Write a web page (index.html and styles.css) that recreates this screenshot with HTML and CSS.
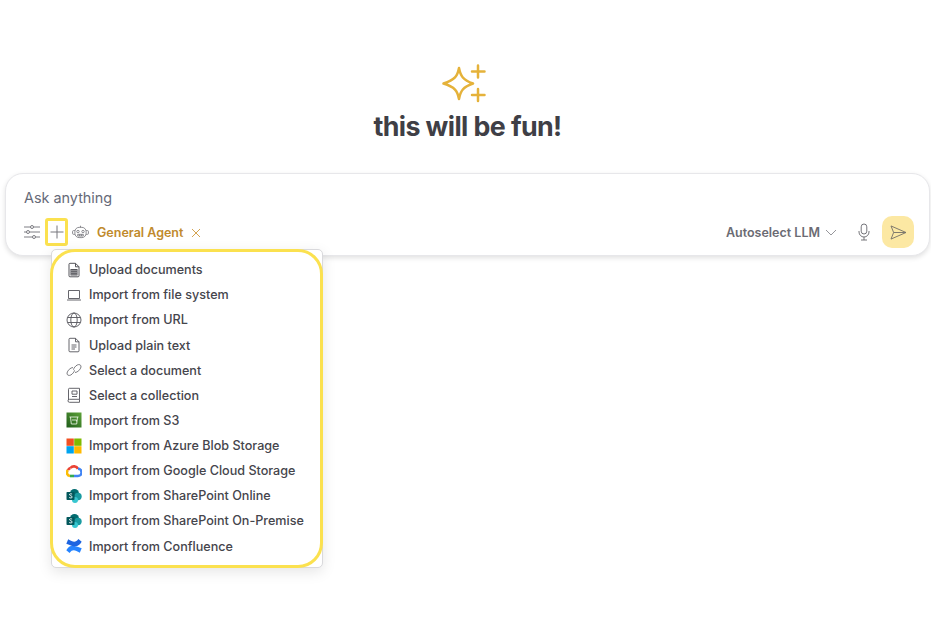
FILE: index.html
```html
<!DOCTYPE html>
<html lang="en">
<head>
<meta charset="utf-8">
<title>Chat</title>
<link rel="stylesheet" href="styles.css">
</head>
<body>
<main class="page">
  <section class="hero">
    <svg class="sparkle" viewBox="0 0 46 44" width="46" height="44" fill="none" stroke="#e5b23a" stroke-width="2.500" stroke-linecap="round" stroke-linejoin="round">
      <path d="M17 6 C18.500 14 21 18 31 21.500 C21 25 18.500 29 17 37 C15.500 29 13 25 1.500 21.500 C13 18 15.500 14 17 6 Z"/>
      <path d="M36 3.500V15.500M30 9.500H42.500"/>
      <path d="M36 27V39M30 33H42.500"/>
    </svg>
    <h1 class="title">this will be fun!</h1>
  </section>

  <section class="composer">
    <div class="prompt">Ask anything</div>
    <div class="toolbar">
      <div class="tools-left">
        <svg class="icon-tune" viewBox="0 0 16 16" width="16" height="16" fill="none" stroke="#6f6f76" stroke-width=".9">
          <path d="M0 3h6.500M9.500 3H16M0 8h2.500M5.500 8H16M0 13h8.500M11.500 13H16"/>
          <circle cx="8" cy="3" r="1.500"/><circle cx="4" cy="8" r="1.500"/><circle cx="10" cy="13" r="1.500"/>
        </svg>
        <button class="plus" type="button" aria-label="Add">
          <svg viewBox="0 0 14 14" width="14" height="14" fill="none" stroke="#77777d" stroke-width="1"><path d="M7 .500v13M.500 7h13"/></svg>
        </button>
        <svg class="icon-robot" viewBox="0 0 18 15" width="17" height="14" fill="none" stroke="#77777d" stroke-width=".9">
          <path d="M9 .800V2.500"/>
          <rect x="3" y="2.500" width="12" height="11" rx="4.500"/>
          <path d="M3 6H1.500a1 1 0 0 0-1 1v2a1 1 0 0 0 1 1H3M15 6h1.500a1 1 0 0 1 1 1v2a1 1 0 0 1-1 1H15"/>
          <circle cx="6.300" cy="7" r="1.300"/><circle cx="11.700" cy="7" r="1.300"/>
          <path d="M6 10h6v1.800H6zM8 10v1.800M10 10v1.800"/>
        </svg>
        <span class="agent">General Agent</span>
        <svg class="icon-x" viewBox="0 0 10 10" width="10" height="10" fill="none" stroke="#cf9a3d" stroke-width=".9"><path d="M1 1l8 8M9 1l-8 8"/></svg>
      </div>
      <div class="tools-right">
        <span class="llm">Autoselect LLM</span>
        <svg class="icon-chevron" viewBox="0 0 12 7" width="12" height="7" fill="none" stroke="#8a8a90" stroke-width=".9"><path d="M1 1l5 5 5-5"/></svg>
        <svg class="icon-mic" viewBox="0 0 12 18" width="12" height="18" fill="none" stroke="#66666c" stroke-width=".9">
          <rect x="3.200" y="1" width="5.600" height="10" rx="2.800"/>
          <path d="M1 8v1a5 5 0 0 0 10 0V8M6 14v3M3 17h6"/>
        </svg>
        <button class="send" type="button" aria-label="Send">
          <svg viewBox="0 0 18 16" width="17" height="15" fill="none" stroke="#77736a" stroke-width="1" stroke-linejoin="round"><path d="M1 1l16 7-16 7 2.800-7zM3.800 8H17"/></svg>
        </button>
      </div>
    </div>
  </section>

  <ul class="menu">
    <li class="item">
      <svg class="ico" viewBox="0 0 16 16" fill="none" stroke="#55555b" stroke-width="1"><path d="M3 2.300a1 1 0 0 1 1-1h5.500L13 4.800v9a1 1 0 0 1-1 1H4a1 1 0 0 1-1-1z"/><path d="M9.500 1.300v3.500H13"/><path d="M5 7.500h6v5.500H5zM5 9.300h6M5 11.200h6M7 7.500v5.500M9 7.500v5.500" stroke-width="1.100"/></svg>
      Upload documents
    </li>
    <li class="item">
      <svg class="ico" viewBox="0 0 16 16" fill="none" stroke="#55555b" stroke-width=".9"><path d="M2.500 3.500h11v8h-11zM1 13h14"/></svg>
      Import from file system
    </li>
    <li class="item">
      <svg class="ico" viewBox="0 0 16 16" fill="none" stroke="#55555b" stroke-width=".9"><circle cx="8" cy="8" r="7"/><ellipse cx="8" cy="8" rx="3.200" ry="7"/><path d="M1.500 5.500h13M1.500 10.500h13"/></svg>
      Import from URL
    </li>
    <li class="item">
      <svg class="ico" viewBox="0 0 16 16" fill="none" stroke="#55555b" stroke-width=".9"><path d="M3 2.300a1 1 0 0 1 1-1h5.500L13 4.800v9a1 1 0 0 1-1 1H4a1 1 0 0 1-1-1z"/><path d="M9.500 1.300v3.500H13M5.500 8h5M5.500 10h5M5.500 12h3.500"/></svg>
      Upload plain text
    </li>
    <li class="item">
      <svg class="ico" viewBox="0 0 16 16" fill="none" stroke="#66666c" stroke-width=".85"><path d="M7 5.500C4.500 5.500 1.500 8.500 1 11c-.4 2.200 2 3 3.800 2C6.500 12 8.300 10 8.500 8.300M9 10.500c2.500 0 5.500-3 6-5.500.4-2.200-2-3-3.800-2C9.500 4 7.700 6 7.500 7.700"/></svg>
      Select a document
    </li>
    <li class="item">
      <svg class="ico" viewBox="0 0 16 16" fill="none" stroke="#55555b" stroke-width=".9"><path d="M2.500 13V2.300a1 1 0 0 1 1-1h10v11h-10a1.500 1.500 0 0 0 0 3h10v-3"/><path d="M6 4h5v3.200H6zM6 9.500h5"/></svg>
      Select a collection
    </li>
    <li class="item">
      <svg class="ico" viewBox="0 0 16 16"><defs><linearGradient id="s3g" x1="0" y1="1" x2="1" y2="0"><stop offset="0" stop-color="#1f5c1a"/><stop offset="1" stop-color="#5ea33a"/></linearGradient></defs><rect x=".5" y=".5" width="15" height="15" fill="url(#s3g)"/><path d="M3.500 5h9M4.500 5l.8 7h5.400l.8-7M6 8h4.500v1.500" fill="none" stroke="#e3efdc" stroke-width=".9"/></svg>
      Import from S3
    </li>
    <li class="item">
      <svg class="ico" viewBox="0 0 16 16"><rect x=".5" y=".5" width="7.300" height="7.300" fill="#f25022"/><rect x="8.200" y=".5" width="7.300" height="7.300" fill="#7fba00"/><rect x=".5" y="8.200" width="7.300" height="7.300" fill="#00a4ef"/><rect x="8.200" y="8.200" width="7.300" height="7.300" fill="#ffb900"/></svg>
      Import from Azure Blob Storage
    </li>
    <li class="item">
      <svg class="ico" viewBox="0 0 16 16" fill="none" stroke-width="2.600">
        <path d="M4.500 5A4.500 4.500 0 0 1 12 5.800" stroke="#ea4335"/>
        <path d="M12 5.800A3.500 3.500 0 0 1 12 13H8" stroke="#4285f4"/>
        <path d="M8 13H4" stroke="#34a853"/>
        <path d="M4 13A3.500 3.500 0 0 1 2 7" stroke="#fbbc05"/>
        <path d="M2 7A4 4 0 0 1 4.500 5" stroke="#ea4335"/>
      </svg>
      Import from Google Cloud Storage
    </li>
    <li class="item">
      <svg class="ico" viewBox="0 0 16 16">
        <circle cx="8.500" cy="5.500" r="4.500" fill="#036c70"/><circle cx="12" cy="8.500" r="3.700" fill="#1a9ba1"/><circle cx="9" cy="12" r="3" fill="#37c6d0"/>
        <rect x=".5" y="4" width="8" height="8" rx=".8" fill="#03585c"/>
        <path d="M6.100 6.100c-1.500-.7-3-.2-2.500.9.400.8 2.700.8 2.600 2.100-.1 1-1.800 1.100-3 .4" fill="none" stroke="#fff" stroke-width=".9"/>
      </svg>
      Import from SharePoint Online
    </li>
    <li class="item">
      <svg class="ico" viewBox="0 0 16 16">
        <circle cx="8.500" cy="5.500" r="4.500" fill="#036c70"/><circle cx="12" cy="8.500" r="3.700" fill="#1a9ba1"/><circle cx="9" cy="12" r="3" fill="#37c6d0"/>
        <rect x=".5" y="4" width="8" height="8" rx=".8" fill="#03585c"/>
        <path d="M6.100 6.100c-1.500-.7-3-.2-2.500.9.400.8 2.700.8 2.600 2.100-.1 1-1.800 1.100-3 .4" fill="none" stroke="#fff" stroke-width=".9"/>
      </svg>
      Import from SharePoint On-Premise
    </li>
    <li class="item">
      <svg class="ico" viewBox="0 0 16 16">
        <path d="M.3 12.200C3.500 7 6.500 6.300 15.700 10.300L13.800 14.700C9 12 6.500 11 3.600 15z" fill="#2684ff"/>
        <path d="M15.700 3.800C12.500 9 9.500 9.700.3 5.700L2.200 1.300C7 4 9.500 5 12.400 1z" fill="#1d64e0"/>
      </svg>
      Import from Confluence
    </li>
  </ul>
</main>
</body>
</html>
```

FILE: styles.css
```css
* { box-sizing: border-box; }
html, body { margin: 0; padding: 0; background: #fff; }
body { font-family: Inter, "Liberation Sans", sans-serif; color: #3f3f46; }
.page { position: relative; width: 931px; height: 635px; padding: 62px 1px 0 5px; overflow: hidden; }
.hero { display: flex; flex-direction: column; align-items: center; }
.sparkle { display: block; margin-right: 6px; }
.title { margin: 0; font-size: 26.800px; line-height: 40px; font-weight: 700; letter-spacing: -.6px; color: #3f3f46; }
.composer { margin-top: 27px; height: 83px; width: 925px; border: 1px solid #e7e7ea; border-radius: 18px; background: #fff; box-shadow: 0 2px 5px rgba(0,0,0,.12); padding: 15px 15px 0 18px; }
.prompt { font-size: 14.400px; line-height: 18px; color: #666a78; }
.toolbar { display: flex; justify-content: space-between; align-items: center; margin-top: 9px; height: 32px; }
.tools-left, .tools-right { display: flex; align-items: center; }
.plus { width: 23px; height: 28px; margin-left: 5px; padding: 0; border: 3px solid #fbe14f; border-radius: 3px; background: #fff; display: flex; align-items: center; justify-content: center; }
.icon-robot { margin-left: 4px; }
.agent { margin-left: 8px; font-size: 12.500px; font-weight: 600; color: #c08a2c; }
.icon-x { margin-left: 8px; margin-top: 2px; }
.llm { font-size: 12.500px; font-weight: 600; color: #6b6b73; }
.icon-chevron { margin-left: 5px; margin-top: 1px; }
.icon-mic { margin-left: 21px; }
.send { width: 32px; height: 32px; margin-left: 12px; border: 0; padding: 0; border-radius: 10px; background: #fce8a3; display: flex; align-items: center; justify-content: center; }
.menu { position: absolute; left: 51px; top: 249px; width: 272px; height: 319px; margin: 0; padding: 7.030px 0 0; list-style: none; background: #fff; border: 1px solid #d9d9dc; border-radius: 5px; box-shadow: 0 4px 14px rgba(0,0,0,.1); display: flex; flex-direction: column; }
.menu::after { content: ""; position: absolute; inset: -1px -1px -1px -2px; border: 3px solid #fbe14f; border-radius: 25px; pointer-events: none; }
.item { height: 25.150px; flex: none; display: flex; align-items: center; gap: 7px; padding-left: 14px; font-size: 12.600px; font-weight: 500; color: #45454c; white-space: nowrap; }
.ico { width: 16px; height: 16px; flex: none; }
```
